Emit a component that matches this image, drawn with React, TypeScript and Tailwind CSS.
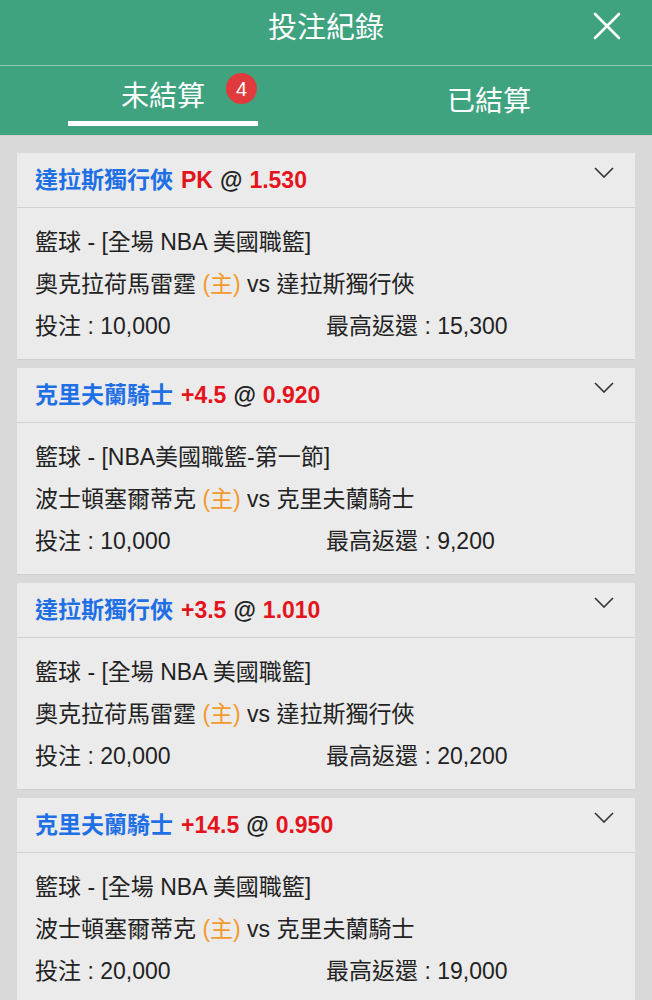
import React from "react";

type Bet = {
  team: string;
  line: string;
  odds: string;
  league: string;
  home: string;
  away: string;
  stake: string;
  payout: string;
};

const bets: Bet[] = [
  {
    team: "達拉斯獨行俠",
    line: "PK",
    odds: "1.530",
    league: "籃球 - [全場 NBA 美國職籃]",
    home: "奧克拉荷馬雷霆",
    away: "達拉斯獨行俠",
    stake: "10,000",
    payout: "15,300",
  },
  {
    team: "克里夫蘭騎士",
    line: "+4.5",
    odds: "0.920",
    league: "籃球 - [NBA美國職籃-第一節]",
    home: "波士頓塞爾蒂克",
    away: "克里夫蘭騎士",
    stake: "10,000",
    payout: "9,200",
  },
  {
    team: "達拉斯獨行俠",
    line: "+3.5",
    odds: "1.010",
    league: "籃球 - [全場 NBA 美國職籃]",
    home: "奧克拉荷馬雷霆",
    away: "達拉斯獨行俠",
    stake: "20,000",
    payout: "20,200",
  },
  {
    team: "克里夫蘭騎士",
    line: "+14.5",
    odds: "0.950",
    league: "籃球 - [全場 NBA 美國職籃]",
    home: "波士頓塞爾蒂克",
    away: "克里夫蘭騎士",
    stake: "20,000",
    payout: "19,000",
  },
];

function BetCard({ bet }: { bet: Bet }) {
  return (
    <div className="bg-[#ebebeb] shadow-[0_1px_1px_rgba(0,0,0,0.04)]">
      {/* 標題列 */}
      <div className="h-[55px] pl-[18px] pr-[21px] flex items-start justify-between border-b border-[#d2d2d2]">
        <div className="h-full flex items-center text-[23px] font-bold whitespace-nowrap">
          <span className="text-[#1f6fe5]">{bet.team}</span>
          <span className="text-[#e5141c] ml-[8px]">{bet.line}</span>
          <span className="text-[#222] ml-[7px]">@</span>
          <span className="text-[#e5141c] ml-[7px]">{bet.odds}</span>
        </div>
        <svg
          className="mt-[14px]"
          width="20"
          height="11"
          viewBox="0 0 20 11"
          fill="none"
          stroke="#333"
          strokeWidth="1.6"
        >
          <path d="M1 1l9 9 9-9" />
        </svg>
      </div>
      {/* 內容 */}
      <div className="pt-[13px] pb-[12px] px-[18px] text-[23px] leading-[42px] text-[#222]">
        <div>{bet.league}</div>
        <div>
          {bet.home} <span className="text-[#f39a2b]">(主)</span> vs {bet.away}
        </div>
        <div className="grid grid-cols-2">
          <div>投注 : {bet.stake}</div>
          <div>最高返還 : {bet.payout}</div>
        </div>
      </div>
    </div>
  );
}

export default function App() {
  return (
    <div
      className="w-[652px] h-[1000px] overflow-hidden bg-[#d9d9d9]"
      style={{ fontFamily: '"Liberation Sans", "Noto Sans CJK TC", sans-serif' }}
    >
      {/* 頂部 */}
      <header className="h-[65px] bg-[#3fa37f] relative flex justify-center">
        <h1 className="mt-[14px] text-[29px] leading-[29px] text-white">投注紀錄</h1>
        <svg
          className="absolute right-[31px] top-[12px]"
          width="28"
          height="28"
          viewBox="0 0 28 28"
          stroke="white"
          strokeWidth="2.6"
          strokeLinecap="round"
        >
          <path d="M2 2l24 24M26 2L2 26" />
        </svg>
      </header>
      <div className="h-px bg-[#8ccab3]" />

      {/* 分頁 */}
      <nav className="h-[70px] bg-[#3fa37f] grid grid-cols-2 text-white text-[28px] border-b border-[#cfcfcf]">
        <div className="flex flex-col items-center justify-end">
          <span className="relative leading-[30px]">
            未結算
            <span className="absolute left-full ml-[21px] top-[-9px] w-[31px] h-[31px] rounded-full bg-[#e03a3c] flex items-center justify-center text-[20px] leading-none">
              4
            </span>
          </span>
          <div className="mt-[9px] mb-[9px] w-[190px] h-[5px] bg-white" />
        </div>
        <div className="flex items-center justify-center pt-[2px]">
          <span className="leading-[30px]">已結算</span>
        </div>
      </nav>

      {/* 投注列表 */}
      <main className="px-[17px] pt-[17px] flex flex-col gap-[9px]">
        {bets.map((bet, i) => (
          <BetCard key={i} bet={bet} />
        ))}
      </main>
    </div>
  );
}
